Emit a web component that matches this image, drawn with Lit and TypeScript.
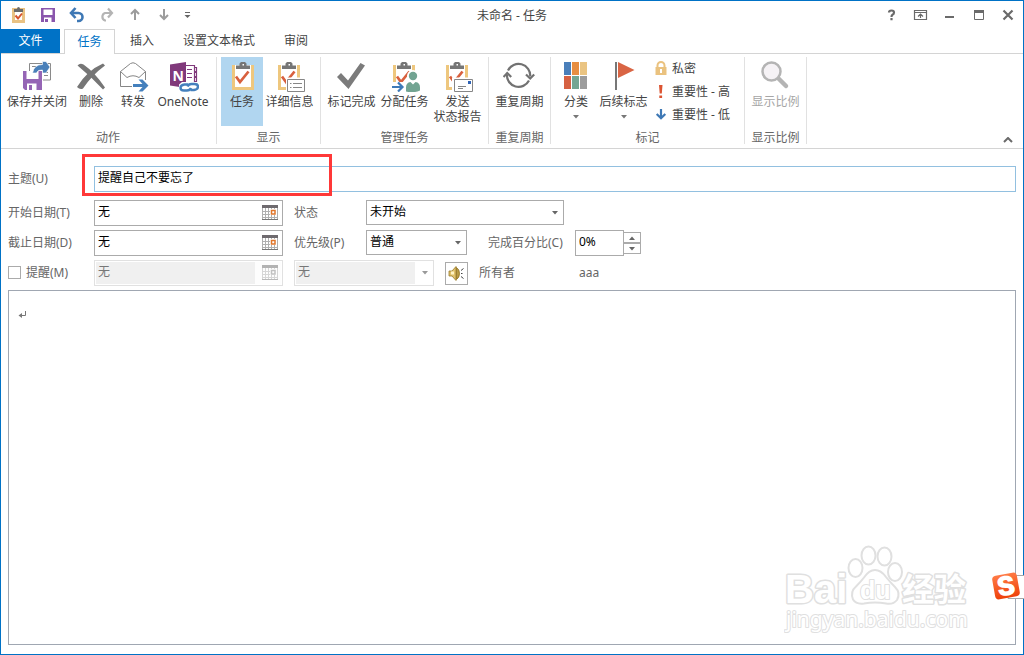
import { LitElement, html, svg, css, nothing } from "lit";
import { customElement } from "lit/decorators.js";
import { classMap } from "lit/directives/class-map.js";

// Icons share one drawing sheet; each one shows its own x / y / w / h window of it.
const icon = (x: number, y: number, w: number, h: number, body: unknown) =>
  html`<svg class="icon" width=${w} height=${h} viewBox="${x} ${y} ${w} ${h}" aria-hidden="true">${body}</svg>`;

const clipboard = (x: number) => svg`
  <rect x=${x + 1.5} y="66.5" width="19" height="22" fill="#fff" stroke="#eec77e" stroke-width="3"/>
  <path transform="translate(${x} 0)" d="M3 65h16v5H3z" fill="#fff"/>
  <path transform="translate(${x} 0)" d="M4 69V65.500h3.500V63.500L9 62h4l1.500 1.500v2H18V69z" fill="#767676"/>
  <path transform="translate(${x} 0)" d="M10.500 64h1.500v1.500h-1.500z" fill="#fff"/>
  <path transform="translate(${x} 0)" d="M4 76.500l4 5.500L16.500 71.500" fill="none" stroke="#d8603e" stroke-width="2.700"/>`;

const downArrow = html`<svg class="drop" width="6" height="4" viewBox="0 0 6 4" aria-hidden="true"><path d="M0 0h6L3 3.500z" fill="currentColor"/></svg>`;

const quick = [
  ["任务", svg`<rect x="13.500" y="9.500" width="10" height="12" fill="#fff" stroke="#e9c283" stroke-width="3"/><path d="M14 12V9h3a1.500 2 0 0 1 3 0h3v3z" fill="#6b6b6b"/><path d="M15.500 15.500l2.500 3 4-5" fill="none" stroke="#d6542f" stroke-width="2"/>`],
  ["保存", svg`<path d="M41 8h14v14H41z" fill="#8a56ad"/><path d="M43.500 9.500h9V15h-9zM44 17.500h7.500V22H44z" fill="#fff"/><path d="M45 19h3v3h-3z" fill="#8a56ad"/>`],
  ["撤消", svg`<path d="M72 13h6.500a4 4 0 0 1 0 8H77" fill="none" stroke="#3e78b5" stroke-width="2.600"/><path d="M75.500 8L71 13l4.500 5" fill="none" stroke="#3e78b5" stroke-width="2.600"/>`],
  ["恢复", svg`<path d="M112 13h-7a4 4 0 0 0 0 7.500h1" fill="none" stroke="#b4b4b4" stroke-width="2.200"/><path d="M108 8.500l4 4.500-4 4.500" fill="none" stroke="#b4b4b4" stroke-width="2.200"/>`],
  ["上一项", svg`<path d="M135 20V10M131 14l4-4 4 4" fill="none" stroke="#9c9c9c" stroke-width="2"/>`],
  ["下一项", svg`<path d="M164 9v10M160 15l4 4 4-4" fill="none" stroke="#9c9c9c" stroke-width="2"/>`],
  ["自定义", svg`<path d="M185 12.500h5" stroke="#666" fill="none"/><path d="M184.500 15h6l-3 3z" fill="#666"/>`],
] as const;

const system = [
  ["帮助", svg`<path d="M889 12.500q0-2 2.500-2t2.500 2q0 1.500-1.500 2.200-1 .6-1 2.300M891.500 18v2.200" fill="none" stroke="#6a6a6a" stroke-width="2.200"/>`],
  ["功能区显示选项", svg`<path d="M914.500 10.500h12v9h-12zM914.500 12.500h12M920.500 18v-4M918 16.500l2.500-2.500 2.500 2.500" fill="none" stroke="#6a6a6a" stroke-width="1.200"/>`],
  ["最小化", svg`<path d="M945 16h9v2h-9z" fill="#6a6a6a"/>`],
  ["最大化", svg`<path d="M974.500 10.500h9v9h-9z" fill="none" stroke="#6a6a6a"/><path d="M974 10h10v3h-10z" fill="#6a6a6a"/>`],
  ["关闭", svg`<path d="M1003.500 10.500l9 9M1012.500 10.500l-9 9" fill="none" stroke="#6a6a6a" stroke-width="2.200"/>`],
] as const;

const saveClose = icon(21, 60, 32, 32, svg`
  <path d="M29.500 72V63.500h21v16.500H43" fill="#fff" stroke="#8a8a8a"/>
  <path d="M44 72.500h4M44 75.500h4M32 66.500h4" stroke="#8a8a8a" fill="none"/>
  <path d="M23 71h19v19H25l-2-2z" fill="#9565b5"/><path d="M26.500 71h12v8h-12zM27 83.500h9.500V90H27z" fill="#fff"/><path d="M29 85h3v5h-3z" fill="#9565b5"/>
  <path d="M32.500 73Q34 64.500 42.500 64.500V61.500h3.500l4 5.500-4 6h-3.500V70Q37.500 69.500 36.500 73z" fill="#4a80b9" stroke="#fff" stroke-width=".6"/>`);
const remove = icon(75, 60, 32, 32, svg`
  <path d="M77.500 65.500Q80 62.500 83.500 64.500 95 72.500 105 87.500L103 89.500Q91 76.500 77.500 65.500z" fill="#767676"/>
  <path d="M103 63.500l2 2Q92 75 83 88.500 80 90 77 87 87 70.500 103 63.500z" fill="#767676"/>`);
const forward = icon(117, 60, 32, 32, svg`
  <path d="M132 86.500h-11.500V71.500L130.500 63.500q2.500-1.500 5 0L145.500 71.500V80" fill="#fff" stroke="#868686"/>
  <path d="M120.500 71.500l6.500 6q6-3.500 12 0l6.500-6" fill="none" stroke="#868686"/>
  <path d="M133 84h9.500l-4-4.500h4l6 6-6 6h-4l4-4.500H133z" fill="#4480bd"/>`);
const oneNote = icon(167, 60, 32, 32, svg`
  <path d="M185 65.500h9.500v18H185M187 69.500h5M187 73.500h5M187 77.500h5M194 67.500h2.500v4H194M194 72.500h2.500v4H194M194 77.500h2.500v4H194" fill="none" stroke="#80397b" stroke-width="1.200"/>
  <path d="M170 64.500L186 62v26l-16-2.500z" fill="#80397b"/>
  <text x="172.500" y="81" font-family="Open Sans" font-size="14" font-weight="700" fill="#fff">N</text>
  <path d="M179 84.500l3-2.500h14l3 2v6l-3 2h-15l-2-2z" fill="#fff"/>
  <g fill="none" stroke="#4480bd" stroke-width="2.400"><path d="M188 84.500h-3.500q-4 .5-4 3.300 0 2.700 3.500 2.700h3q3 0 4-2.500"/><path d="M190.500 90h3.500q4-.5 4-3.300 0-2.700-3.500-2.700h-3q-3 0-4 2.500"/></g>`);
const task = icon(226, 60, 32, 32, clipboard(232));
const details = icon(273, 60, 33, 32, svg`${clipboard(278)}
  <path d="M286 77.500h20V92h-20z" fill="#fff"/><path d="M287.500 79.500h17v12h-17z" fill="#fff" stroke="#868686"/>
  <path d="M290 83.500h1.500M290 87.500h1.500M293 83.500h9M293 87.500h9" stroke="#868686" fill="none"/>`);
const markDone = icon(335, 60, 33, 32, svg`<path d="M337 77l4-4 7 7.500L360.500 63l4.500 2.500L348.500 89z" fill="#7b7b7b"/>`);
const assign = icon(388, 60, 33, 32, svg`${clipboard(393)}
  <path d="M391 82h14v10h-14z" fill="#fff"/>
  <path d="M404 92v-5q0-5 5-6-2-2-2-5a6 6 0 0 1 12 0q0 3-1 5 3 1 3 5v6z" fill="#fff"/>
  <circle cx="413" cy="76" r="4.200" fill="#72a492"/><path d="M406 91.500v-4q0-5 4.500-5.500l2.500 2.500 2.500-2.500q4.500.5 4.500 5.500v3q-7 3-14 1z" fill="#72a492"/>
  <path d="M392 87h10M398 82.500l4.500 4.500-4.500 4.500" fill="none" stroke="#3e7ab8" stroke-width="2.200"/>`);
const sendReport = icon(441, 60, 33, 32, svg`${clipboard(446)}
  <path d="M452 77.500h22V92h-22z" fill="#fff"/><path d="M454.500 79.500h18v12h-18z" fill="#fff" stroke="#868686"/>
  <path d="M468 81h3v3h-3z" fill="#2f63b5"/><path d="M458 86.500h8M458 88.500h5" stroke="#868686" fill="none"/>`);
const recurrence = icon(503, 60, 33, 32, svg`
  <path d="M508 70.500A11.700 11.700 0 0 1 530.200 76.500M529 80.500A11.700 11.700 0 0 1 506.900 74.500" fill="none" stroke="#727272" stroke-width="2.200"/>
  <path d="M526 74.500l4.200 4 4-4M503.500 77l3.700-4 4 4" fill="none" stroke="#727272" stroke-width="2.200"/>`);
const categorize = icon(560, 60, 32, 32, svg`
  <path d="M564 62h7v13h-7z" fill="#4a7fba"/><path d="M572 62h7v13h-7z" fill="#e78e42"/><path d="M580 62h7v13h-7z" fill="#eac482"/>
  <path d="M564 76h7v13h-7z" fill="#d66142"/><path d="M572 76h7v13h-7z" fill="#74a693"/><path d="M580 76h7v13h-7z" fill="#9c9c9c"/>`);
const flag = icon(607, 60, 33, 32, svg`<path d="M615 62h2v28h-2z" fill="#777"/><path d="M618 62l16.500 8L618 78z" fill="#d96544"/>`);
const zoomIcon = icon(759, 60, 33, 32, svg`
  <path d="M778 78l8 8" stroke="#b4b4b4" stroke-width="4.500" stroke-linecap="round"/><circle cx="771.500" cy="71.500" r="9" fill="#f5f2f5" stroke="#b4b4b4" stroke-width="2.500"/>`);
const lock = icon(653, 60, 16, 17, svg`<path d="M657.500 68v-2.500a3.500 3.500 0 0 1 7 0V68" fill="none" stroke="#eac27f" stroke-width="2"/><path d="M655.500 67h11v8h-11z" fill="#eac27f"/><path d="M660 69h2v4h-2z" fill="#fff"/>`);
const high = icon(653, 83, 16, 17, svg`<path d="M659 85h3.500l-.7 8.500h-2.100zM659.300 95.500h2.800V98h-2.800z" fill="#dc5432"/>`);
const low = icon(653, 106, 16, 17, svg`<path d="M661 109v9M656.700 114l4.300 4.300 4.300-4.300" fill="none" stroke="#3e78b5" stroke-width="2.200"/>`);

const calendar = html`<svg class="icon" width="16" height="16" viewBox="0 0 16 16" aria-hidden="true">
  <path d="M.5 3v11.500h15V3M3.500 3v11M6.500 3v11M9.500 3v11M12.500 3v11M1 6.500h14M1 9.500h14M1 12.500h14" fill="none" stroke="#b0b0b0"/>
  <path d="M0 0h16v3H0z" fill="#6e6a6e"/><path d="M0 14h16v1H0z" fill="#777"/><path d="M8 4h7v6H8z" fill="#fff"/><path d="M9.500 5.500h3.500v3.500H9.500z" fill="#fff" stroke="#e0762b" stroke-width="1.500"/></svg>`;

type Cmd = { label: string; sub?: string; glyph: unknown; size: string; drop?: boolean; on?: boolean; off?: boolean };
const groups: { title: string; cmds: Cmd[]; marks?: [string, unknown][] }[] = [
  { title: "动作", cmds: [
    { label: "保存并关闭", glyph: saveClose, size: "wide" },
    { label: "删除", glyph: remove, size: "slim" },
    { label: "转发", glyph: forward, size: "slim" },
    { label: "OneNote", glyph: oneNote, size: "mid" } ] },
  { title: "显示", cmds: [
    { label: "任务", glyph: task, size: "slim", on: true },
    { label: "详细信息", glyph: details, size: "four" } ] },
  { title: "管理任务", cmds: [
    { label: "标记完成", glyph: markDone, size: "four" },
    { label: "分配任务", glyph: assign, size: "four" },
    { label: "发送", sub: "状态报告", glyph: sendReport, size: "four" } ] },
  { title: "重复周期", cmds: [{ label: "重复周期", glyph: recurrence, size: "four" }] },
  { title: "标记", cmds: [
    { label: "分类", glyph: categorize, size: "slim", drop: true },
    { label: "后续标志", glyph: flag, size: "four", drop: true } ],
    marks: [["私密", lock], ["重要性 - 高", high], ["重要性 - 低", low]] },
  { title: "显示比例", cmds: [{ label: "显示比例", glyph: zoomIcon, size: "four", off: true }] },
];

@customElement("app-root")
export class AppRoot extends LitElement {
  static styles = css`
    :host {
      display: block;
      font: 12px/15px "Noto Sans", "Noto Sans CJK SC", sans-serif;
      color: #444;
    }
    * { box-sizing: border-box; }
    button, input, select, textarea { font: inherit; color: inherit; margin: 0; border-radius: 0; outline: none; }
    button { background: none; border: 0; padding: 0; }
    .icon, .drop { display: block; flex: none; }
    .window {
      position: relative; display: flex; flex-direction: column;
      min-height: 100vh; border: 1px solid #0072c6; background: #fff;
    }
    .titlebar { display: grid; grid-template-columns: 1fr auto 1fr; align-items: center; height: 28px; }
    .side { display: flex; padding-left: 3px; }
    .side.right { justify-content: flex-end; padding-left: 0; }
    .title { margin: 0; font-size: 12px; font-weight: 400; }
    .tabs { display: flex; gap: 1px; height: 25px; border-bottom: 1px solid #d4d4d4; }
    .tab { padding: 0 14px 1px; height: 24px; }
    .tab.file { width: 59px; margin-right: 3px; background: #0072c6; color: #fff; }
    .tab.active { width: 51px; padding: 0 12px 2px; height: 25px; border: 1px solid #d4d4d4; border-bottom: 0; background: #fff; color: #0072c6; }
    .ribbon { display: flex; height: 95px; padding-top: 3px; border-bottom: 1px solid #d4d4d4; }
    .group { display: flex; flex-direction: column; padding: 0 4px; border-right: 1px solid #e1e1e1; margin-bottom: 4px; }
    .group:first-child { padding-left: 3px; }
    .cmds { display: flex; height: 69px; }
    .caption { text-align: center; line-height: 24px; height: 18px; color: #666; }
    .cmd { display: flex; flex-direction: column; align-items: center; padding-top: 3px; white-space: nowrap; }
    .cmd .text { margin-top: 2px; }
    .cmd .drop { margin-top: 6px; color: #777; }
    .cmd.on { background: #b1d6f0; }
    .cmd.off { color: #a6a6a6; }
    .wide { width: 66px; } .slim { width: 42px; } .mid { width: 58px; } .four { width: 53px; }
    .marks { width: 90px; }
    .mark { display: flex; align-items: center; gap: 3px; width: 100%; height: 23px; padding-left: 3px; white-space: nowrap; }
    .collapse { align-self: flex-end; margin: 0 10px 5px auto; }
    .form { display: flex; flex-direction: column; flex: 1; padding: 17px 7px 9px; color: #666; }
    .row { display: flex; align-items: center; height: 26px; margin-bottom: 4px; }
    .row.first { margin-bottom: 8px; }
    .row > label, .row > span { padding-bottom: 2px; }
    .name { width: 86px; flex: none; }
    .check { display: flex; align-items: center; gap: 5px; }
    .tick { appearance: none; width: 13px; height: 13px; border: 1px solid #ababab; background: #fff; }
    .subject { position: relative; flex: 1; height: 26px; }
    .subject .line { width: 100%; border: 1px solid #92c0e0; }
    .line { height: 26px; padding: 0 3px 4px; color: #000; background: #fff; border: 1px solid #ababab; min-width: 0; }
    .callout { position: absolute; left: -12px; top: -12px; width: 250px; height: 42px; border: 3px solid #ff3838; pointer-events: none; }
    .date { display: flex; width: 189px; height: 26px; margin-right: 11px; border: 1px solid #ababab; padding: 1px; flex: none; }
    .date .line { flex: 1; height: 22px; border: 0; padding: 0 2px 4px; }
    .date .pick { display: grid; place-items: center; width: 26px; height: 22px; padding-left: 4px; }
    .date.dim { border-color: #e1e1e1; }
    .date.dim .line { background: #f0f0f0; color: #777; }
    .date.dim .pick { background: #fdfdfd; }
    .date.dim .icon { opacity: .5; filter: grayscale(1); }
    .second { width: 72px; flex: none; }
    .combo { display: grid; align-items: center; height: 26px; flex: none; }
    .combo > * { grid-area: 1 / 1; }
    .combo select { appearance: none; width: 100%; height: 25px; align-self: start; padding: 0 3px 2px; border: 1px solid #ababab; background: #fff; color: #000; }
    .combo select:disabled { height: 26px; padding-bottom: 4px; opacity: 1; color: #777; border-color: #e1e1e1; background: linear-gradient(#f0f0f0, #f0f0f0) 1px 1px / calc(100% - 19px) calc(100% - 2px) no-repeat; }
    .combo .drop { justify-self: end; margin-right: 6px; pointer-events: none; color: #666; }
    .combo select:disabled + .drop { color: #999; }
    .status { width: 198px; } .priority { width: 101px; } .time { width: 140px; }
    .percent-name { margin-left: 21px; width: 87px; white-space: nowrap; }
    .percent { width: 49px; }
    .spin { display: flex; flex-direction: column; width: 18px; margin-left: -1px; }
    .step { display: grid; place-items: center; height: 11px; border: 1px solid #ababab; color: #666; }
    .step.up svg { transform: rotate(180deg); }
    .sound { display: grid; place-items: center; width: 23px; height: 23px; margin: 0 11px; border: 1px solid #ababab; }
    .owner { width: 100px; }
    .body { display: grid; flex: 1; }
    .body > * { grid-area: 1 / 1; }
    .note { width: 100%; height: 100%; resize: none; padding: 16px 12px; border: 1px solid #a0a7b2; background: #fff; color: #000; }
    .pilcrow { margin: 21px 0 0 10px; pointer-events: none; }
    .watermark { position: absolute; right: 45px; bottom: 16px; pointer-events: none; }
    .ime { position: absolute; right: -1px; bottom: 52px; }
    .ime svg { display: block; }
  `;

  private command(c: Cmd) {
    return html`<button class=${classMap({ cmd: true, [c.size]: true, on: !!c.on, off: !!c.off })} ?disabled=${!!c.off}>
      ${c.glyph}<span class="text">${c.label}${c.sub ? html`<br />${c.sub}` : nothing}</span>${c.drop ? downArrow : nothing}
    </button>`;
  }

  private date(id: string, dim = false) {
    return html`<div class=${classMap({ date: true, dim })}>
      <input class="line" id=${id} value="无" ?disabled=${dim} />
      <button class="pick" aria-label="日历" ?disabled=${dim}>${calendar}</button>
    </div>`;
  }

  render() {
    return html`<div class="window">
      <header class="titlebar">
        <div class="side">${quick.map(([name, g], i) => html`<button aria-label=${name}>${icon(4 + 29 * i, 1, 29, 28, g)}</button>`)}</div>
        <h1 class="title">未命名 - 任务</h1>
        <div class="side right">${system.map(([name, g], i) => html`<button aria-label=${name}>${icon(878 + 29 * i, 1, 29, 28, g)}</button>`)}</div>
      </header>
      <nav class="tabs">
        <button class="tab file">文件</button>
        <button class="tab active">任务</button>
        <button class="tab">插入</button>
        <button class="tab">设置文本格式</button>
        <button class="tab">审阅</button>
      </nav>
      <div class="ribbon">
        ${groups.map((g) => html`<section class="group">
          <div class="cmds">
            ${g.cmds.map((c) => this.command(c))}
            ${g.marks ? html`<div class="marks">${g.marks.map(([t, i]) => html`<button class="mark">${i}<span>${t}</span></button>`)}</div>` : nothing}
          </div>
          <div class="caption">${g.title}</div>
        </section>`)}
        <button class="collapse" aria-label="折叠功能区"><svg class="icon" width="10" height="6" viewBox="0 0 10 6"><path d="M1 5l4-4 4 4" fill="none" stroke="#6a6a6a" stroke-width="2"/></svg></button>
      </div>
      <main class="form">
        <div class="row first">
          <label class="name" for="subject">主题(U)</label>
          <div class="subject"><input class="line" id="subject" value="提醒自己不要忘了" /><div class="callout"></div></div>
        </div>
        <div class="row">
          <label class="name" for="start">开始日期(T)</label>${this.date("start")}
          <label class="second" for="status">状态</label>
          <div class="combo status"><select id="status"><option>未开始</option></select>${downArrow}</div>
        </div>
        <div class="row">
          <label class="name" for="due">截止日期(D)</label>${this.date("due")}
          <label class="second" for="priority">优先级(P)</label>
          <div class="combo priority"><select id="priority"><option>普通</option></select>${downArrow}</div>
          <label class="percent-name" for="percent">完成百分比(C)</label>
          <input class="line percent" id="percent" value="0%" />
          <div class="spin">
            <button class="step up" aria-label="增加">${downArrow}</button>
            <button class="step" aria-label="减少">${downArrow}</button>
          </div>
        </div>
        <div class="row">
          <label class="name check"><input class="tick" type="checkbox" />提醒(M)</label>${this.date("reminder", true)}
          <div class="combo time"><select aria-label="提醒时间" disabled><option>无</option></select>${downArrow}</div>
          <button class="sound" aria-label="声音"><svg class="icon" width="17" height="15" viewBox="0 0 17 15">
            <path d="M1 5h3l4-4.500v14L4 10H1z" fill="#dfc06a" stroke="#9a7c2c" stroke-width=".8"/><path d="M3 5.500h3v3H3z" fill="#fff3c4"/>
            <path d="M8.500 1.500q3 2 3 6t-3 6z" fill="#b99b45" stroke="#8f7020" stroke-width=".8"/>
            <path d="M13 4.500l2.500-2M13 7.500h1.500M13 10.500l2.500 2" stroke="#444" stroke-width="1" fill="none"/></svg></button>
          <span class="owner">所有者</span><span>aaa</span>
        </div>
        <div class="body">
          <textarea class="note" aria-label="正文"></textarea>
          <svg class="pilcrow" width="9" height="8" viewBox="0 0 9 8" aria-hidden="true"><path d="M7.500 0v4.500H2" fill="none" stroke="#777"/><path d="M4 2v5L.5 4.500z" fill="#777"/></svg>
        </div>
      </main>
      <svg class="watermark" width="194" height="95" viewBox="784 543 194 95" aria-hidden="true">
        <g fill="#fff" stroke="#e0e0e0" stroke-width="2" stroke-linejoin="round">
          <g font-family="Liberation Sans" font-weight="700" paint-order="stroke" stroke-width="3">
            <text x="785" y="603" font-size="40">Bai</text>
            <text x="902" y="601" font-size="32" font-family="Noto Sans CJK SC">经验</text>
          </g>
          <ellipse cx="855.500" cy="568" rx="7" ry="9"/><ellipse cx="868.500" cy="555.500" rx="7" ry="9"/>
          <ellipse cx="884.500" cy="556.500" rx="7" ry="9"/><ellipse cx="895" cy="572" rx="7" ry="9"/>
          <path d="M875 570q6 0 11 7 4 5 9 10 6 6 2 13-4 5-11 3.500-11-2-22 0-8 1-11-4-3-8 3-13 5-5 8-9 5-7.500 11-7.500z"/>
          <text x="860" y="599" font-family="Liberation Sans" font-weight="700" font-size="25" paint-order="stroke">du</text>
          <text x="786" y="627" font-family="Noto Sans" font-size="21" paint-order="stroke">jingyan.baidu.com</text>
        </g>
      </svg>
      <div class="ime"><svg width="34" height="32" viewBox="990 570 34 32" role="img" aria-label="搜狗输入法">
        <defs><linearGradient id="sg" x1="0" y1="0" x2="0" y2="1"><stop offset="0" stop-color="#ff7b45"/><stop offset="1" stop-color="#ee4109"/></linearGradient></defs>
        <path d="M1008 575.500h17v23h-17z" fill="#fff" stroke="#a8a8a8"/>
        <g transform="rotate(-10 1006 586)"><rect x="993.500" y="574" width="25" height="24" rx="4" fill="url(#sg)"/>
        <text x="1006" y="595.500" text-anchor="middle" font-family="Inter" font-weight="900" font-size="27" fill="#fff">S</text></g>
      </svg></div>
    </div>`;
  }
}
